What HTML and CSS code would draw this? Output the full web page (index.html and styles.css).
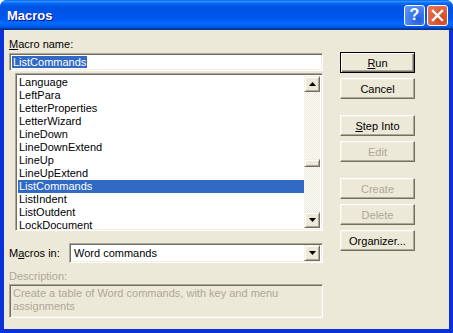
FILE: index.html
```html
<!DOCTYPE html>
<html lang="en">
<head>
  <meta charset="UTF-8" />
  <title>Macros</title>
  <link rel="stylesheet" href="styles.css">
</head>
<body>

  <div class="window">
    <!-- Title bar -->
    <div class="titlebar">
      <span class="title">Macros</span>
      <div class="title-buttons">
        <span class="tb-btn help">?</span>
        <span class="tb-btn close">
          <svg width="13" height="13" viewBox="0 0 13 13">
            <path d="M2 2 L11 11 M11 2 L2 11" stroke="#fff" stroke-width="2.4" stroke-linecap="square" />
          </svg>
        </span>
      </div>
    </div>

    <!-- Client area -->
    <div class="client">
      <div class="left">
        <div class="lbl"><u>M</u>acro name:</div>
        <div class="field sunken"><span class="sel-text">ListCommands</span></div>

        <div class="listbox sunken">
          <ul class="items">
            <li>Language</li>
            <li>LeftPara</li>
            <li>LetterProperties</li>
            <li>LetterWizard</li>
            <li>LineDown</li>
            <li>LineDownExtend</li>
            <li>LineUp</li>
            <li>LineUpExtend</li>
            <li class="selected">ListCommands</li>
            <li>ListIndent</li>
            <li>ListOutdent</li>
            <li>LockDocument</li>
          </ul>
          <div class="vscroll">
            <div class="sbtn">
              <svg width="7" height="4" viewBox="0 0 7 4"><polygon points="3.5,0 7,4 0,4" fill="#000" /></svg>
            </div>
            <div class="track"><div class="thumb"></div></div>
            <div class="sbtn">
              <svg width="7" height="4" viewBox="0 0 7 4"><polygon points="0,0 7,0 3.5,4" fill="#000" /></svg>
            </div>
          </div>
        </div>

        <div class="macros-in">
          <div class="lbl">M<u>a</u>cros in:</div>
          <div class="combo sunken">
            <span class="combo-text">Word commands</span>
            <div class="sbtn">
              <svg width="7" height="4" viewBox="0 0 7 4"><polygon points="0,0 7,0 3.5,4" fill="#000" /></svg>
            </div>
          </div>
        </div>

        <div class="lbl disabled desc-lbl">Description:</div>
        <div class="desc sunken">Create a table of Word commands, with key and menu assignments</div>
      </div>

      <!-- Buttons -->
      <div class="buttons">
        <button class="btn default"><u>R</u>un</button>
        <button class="btn">Cancel</button>
        <button class="btn group"><u>S</u>tep Into</button>
        <button class="btn" disabled>Edit</button>
        <button class="btn group" disabled>Create</button>
        <button class="btn" disabled>Delete</button>
        <button class="btn">Or<u>g</u>anizer...</button>
      </div>
    </div>
  </div>

</body>
</html>
```

FILE: styles.css
```css
* {
  box-sizing: border-box;
  margin: 0;
  padding: 0;
}

body {
  background: #fff;
  font-family: 'Liberation Sans', Arial, sans-serif;
  font-size: 11px;
  color: #000;
}

.window {
  width: 453px;
  height: 333px;
  display: flex;
  flex-direction: column;
  background: #0831d9;
  border-radius: 7px 7px 0 0;
  overflow: hidden;
}

.titlebar {
  height: 30px;
  display: flex;
  justify-content: space-between;
  align-items: center;
  padding: 0 5px 0 7px;
  background: linear-gradient(to bottom, #0058ee 0%, #3593ff 4%, #288eff 6%, #127dff 8%, #036ffc 10%, #0262ee 14%, #0057e5 20%, #0054e3 24%, #0055eb 56%, #005bf5 66%, #026afe 76%, #0062ef 86%, #0052d6 92%, #0040ab 94%, #003092 100%);
}

.title {
  color: #fff;
  font-size: 13px;
  font-weight: bold;
  text-shadow: 1px 1px #0f1089;
}

.title-buttons {
  display: flex;
  gap: 2px;
}

.tb-btn {
  width: 21px;
  height: 21px;
  border: 1px solid #fff;
  border-radius: 3px;
  display: flex;
  align-items: center;
  justify-content: center;
  color: #fff;
}

.help {
  background: radial-gradient(circle at 70% 70%, #1f5fe0, #5a8ff5 80%);
  font-size: 16px;
  font-weight: bold;
}

.close {
  background: radial-gradient(circle at 70% 70%, #cc4624, #e8704e 80%);
}

.client {
  flex: 1;
  margin: 0 4px 4px 4px;
  background: #ece9d8;
  display: flex;
  padding: 8px 0 0 5px;
}

.left {
  width: 314px;
}

.lbl {
  line-height: 13px;
}

.disabled {
  color: #aca899;
}

.sunken {
  border: 1px solid;
  border-color: #aca899 #fff #fff #aca899;
  box-shadow: inset 1px 1px 0 #716f64, inset -1px -1px 0 #f1efe2;
}

.field {
  margin-top: 2px;
  height: 18px;
  background: #fff;
  padding: 2px 2px;
}

.sel-text {
  display: inline-block;
  line-height: 12px;
  background: #316ac5;
  color: #fff;
  padding: 0 1px;
}

.listbox {
  margin: 2px 0 0 6px;
  width: 308px;
  height: 158px;
  background: #fff;
  display: flex;
  padding: 1px 2px 0 2px;
  overflow: hidden;
}

.items {
  flex: 1;
  list-style: none;
  overflow: hidden;
  padding-top: 1px;
}

.items li {
  line-height: 13px;
  height: 13px;
  padding-left: 1px;
}

.items li.selected {
  background: #316ac5;
  color: #fff;
}

.vscroll {
  width: 16px;
  margin: 1px 0 2px;
  display: flex;
  flex-direction: column;
}

.sbtn {
  width: 16px;
  height: 16px;
  flex-shrink: 0;
  background: #ece9d8;
  border: 1px solid;
  border-color: #f1efe2 #716f64 #716f64 #f1efe2;
  box-shadow: inset 1px 1px 0 #fff, inset -1px -1px 0 #aca899;
  display: flex;
  align-items: center;
  justify-content: center;
}

.track {
  flex: 1;
  background: repeating-conic-gradient(#fff 0 25%, #ece9d8 0 50%) 0 0 / 2px 2px;
  padding-top: 67px;
}

.thumb {
  height: 8px;
  background: #ece9d8;
  border: 1px solid;
  border-color: #f1efe2 #716f64 #716f64 #f1efe2;
  box-shadow: inset 1px 1px 0 #fff, inset -1px -1px 0 #aca899;
}

.macros-in {
  display: flex;
  align-items: center;
  margin-top: 12px;
}

.macros-in .lbl {
  width: 60px;
}

.combo {
  flex: 1;
  height: 20px;
  background: #fff;
  display: flex;
  align-items: center;
  justify-content: space-between;
  padding: 2px;
}

.combo-text {
  padding-left: 2px;
}

.desc-lbl {
  margin-top: 7px;
}

.desc {
  margin-top: 1px;
  height: 34px;
  padding: 2px 3px;
  color: #aca899;
  line-height: 13px;
}

.buttons {
  width: 75px;
  margin: 14px 0 0 17px;
  display: flex;
  flex-direction: column;
}

.btn {
  height: 21px;
  margin-bottom: 5px;
  font-family: 'Liberation Sans', Arial, sans-serif;
  font-size: 11px;
  color: #000;
  background: #ece9d8;
  border: 1px solid;
  border-color: #fff #716f64 #716f64 #fff;
  box-shadow: inset -1px -1px 0 #aca899, inset 1px 1px 0 #f1efe2;
}

.btn.default {
  border: 1px solid #000;
  box-shadow: inset 1px 1px 0 #fff, inset -1px -1px 0 #716f64, inset -2px -2px 0 #aca899;
}

.btn.group {
  margin-top: 11px;
}

.btn:disabled {
  color: #aca899;
}
```
